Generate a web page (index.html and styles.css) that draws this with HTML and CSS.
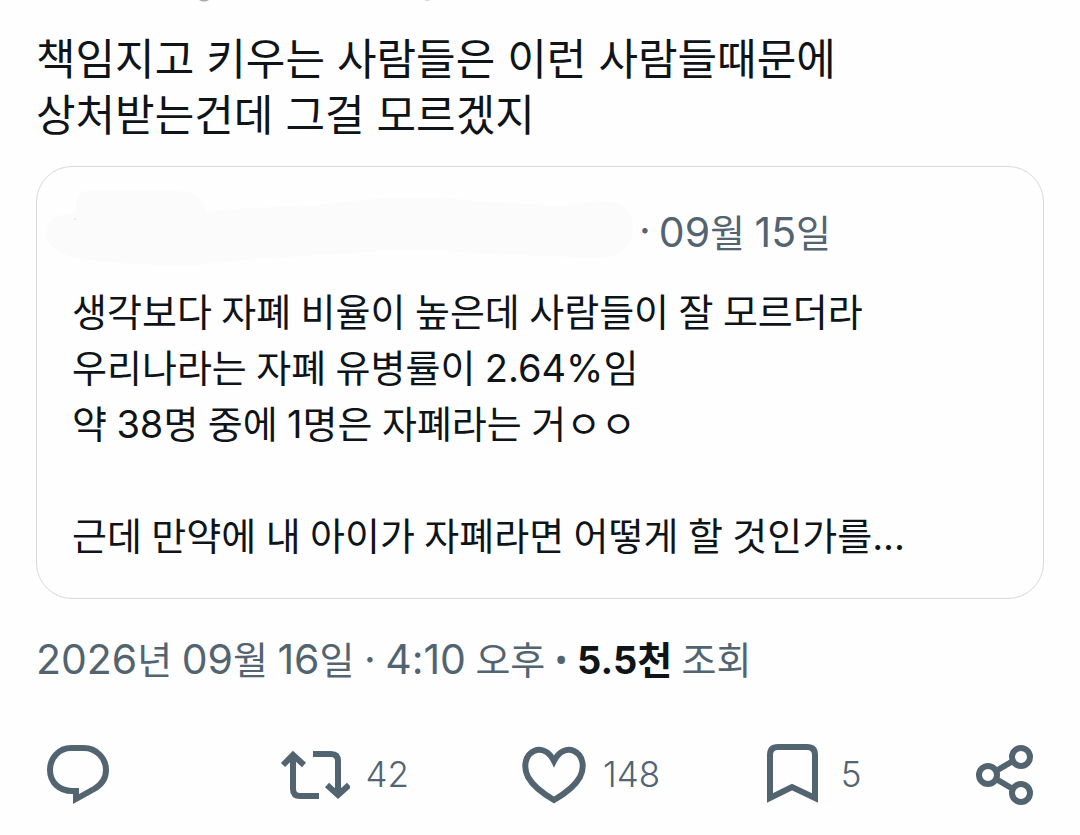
FILE: index.html
```html
<!DOCTYPE html>
<html lang="ko">
<head>
  <meta charset="UTF-8">
  <meta name="viewport" content="width=device-width, initial-scale=1.0">
  <title>게시물</title>
  <link rel="stylesheet" href="styles.css">
</head>
<body>
  <article class="post">
    <div class="previous" aria-hidden="true">
      <svg width="240" height="3" viewBox="0 0 240 3">
        <path d="M9 0Q14 3 19 0Z"/>
        <path d="M234 0Q238 2 240 0Z" opacity=".5"/>
      </svg>
    </div>
    <p class="post-text">책임지고 키우는 사람들은 이런 사람들때문에<br>상처받는건데 그걸 모르겠지</p>

    <section class="quote">
      <header class="quote-header">
        <svg class="smudge" viewBox="0 4 590 78" aria-hidden="true">
          <path d="M31 25V17Q34 4 42 3Q88 -1 143 5Q157 10 162 25Q205 20 260 19L320 13Q370 7 430 14L520 19Q561 11 574 17Q588 25 588 43Q588 61 568 69Q550 72 510 69Q440 67 400 64Q360 61 310 66Q200 72 150 78Q80 79 30 71Q2 62 1 47Q1 33 16 28Z"/>
          <circle cx="30" cy="32" r="1"/>
        </svg>
        <span class="dot num">·</span>
        <time><span class="num">09</span>월 <span class="num">15</span>일</time>
      </header>
      <p class="quote-text">생각보다 자폐 비율이 높은데 사람들이 잘 모르더라<br>우리나라는 자폐 유병률이 <span class="num">2.64%</span>임<br>약 <span class="num">38</span>명 중에 <span class="num">1</span>명은 자폐라는 거ㅇㅇ<br><br>근데 만약에 내 아이가 자폐라면 어떻게 할 것인가를<span class="num">...</span></p>
    </section>

    <p class="meta"><time><span class="num">2026</span>년 <span class="num">09</span>월 <span class="num">16</span>일 <span class="num">·</span> <span class="num">4:10</span> 오후</time> • <strong>5.5천</strong> 조회</p>

    <footer class="actions">
      <button type="button" aria-label="답글">
        <svg width="66" height="66" viewBox="0 0 66 66"><path d="M27 7H40C52 7 62 17 62 29C62 38 57 44 50 48L32 58V50H28C15 50 6 41 6 29C6 17 15 7 27 7Z"/></svg>
      </button>
      <button type="button" aria-label="재게시">
        <svg width="70" height="66" viewBox="0 0 70 66"><path d="M3 24L13 14L24 24M13 15V48Q13 55 20 55H39M33 13H51Q58 13 58 20V54M47 44L58 54L69 44"/></svg>
        <span>42</span>
      </button>
      <button type="button" aria-label="마음에 들어요">
        <svg width="66" height="66" viewBox="0 0 66 66"><path d="M33 20C28 10 20 7 13 10C4 14 2 26 7 36C12 45 21 52 33 59C45 52 54 45 59 36C64 26 62 14 53 10C46 7 38 10 33 20Z"/></svg>
        <span>148</span>
      </button>
      <button type="button" aria-label="북마크">
        <svg width="62" height="66" viewBox="0 0 62 66"><path d="M7 57V14Q7 6 15 6H44Q52 6 52 14V57L29 46Z"/></svg>
        <span>5</span>
      </button>
      <button type="button" aria-label="공유">
        <svg width="62" height="66" viewBox="0 0 62 66"><circle cx="14" cy="34" r="9"/><circle cx="47" cy="16" r="9"/><circle cx="47" cy="52" r="9"/><path d="M22 30L39 20M22 38L39 48"/></svg>
      </button>
    </footer>
  </article>
</body>
</html>
```
FILE: styles.css
```css
* {
  box-sizing: border-box;
}
body {
  margin: 0;
  background: #fefefe;
  color: #0f1419;
  font-family: Roboto, "Noto Sans CJK KR", sans-serif;
}
p {
  margin: 0;
}
.num {
  font-family: Inter, sans-serif;
  line-height: 1;
}
.post {
  padding: 0 36px;
}
.previous {
  height: 28px;
  padding-left: 154px;
}
.previous svg {
  display: block;
  fill: #a5a9ad;
}
.post-text {
  font-family: "Noto Sans CJK KR", sans-serif;
  font-size: 43px;
  line-height: 56px;
}
.quote {
  margin-top: 26px;
  padding: 21px 35px 33px;
  border: 1px solid #d5dadd;
  border-radius: 36px;
}
.quote-header {
  display: flex;
  align-items: center;
  height: 84px;
  margin-left: -27px;
  color: #536471;
  font-size: 38px;
}
.quote-header .num,
.meta .num {
  font-size: 41px;
}
.smudge {
  width: 590px;
  height: 78px;
}
.smudge path {
  fill: #fbfbfb;
}
.smudge circle {
  fill: #e8e8e8;
}
.dot {
  margin: 0 8px 0 4px;
}
.quote-text {
  margin-top: 13px;
  font-size: 38px;
  line-height: 56px;
}
.meta {
  margin-top: 34px;
  color: #536471;
  font-size: 38px;
  line-height: 56px;
}
.meta strong {
  color: #0f1419;
  font-family: Inter, "Noto Sans CJK KR", sans-serif;
  line-height: 1;
}
.actions {
  display: grid;
  grid-template-columns: 78fr 80fr 80fr 70fr auto;
  margin-top: 52px;
  padding: 0 8px;
}
.actions button {
  display: flex;
  align-items: center;
  gap: 16px;
  padding: 0;
  border: none;
  background: none;
  color: #536471;
  font-family: Inter, sans-serif;
  font-size: 35px;
  font-weight: 300;
}
.actions svg {
  fill: none;
  stroke: #536471;
  stroke-width: 6;
}
```
